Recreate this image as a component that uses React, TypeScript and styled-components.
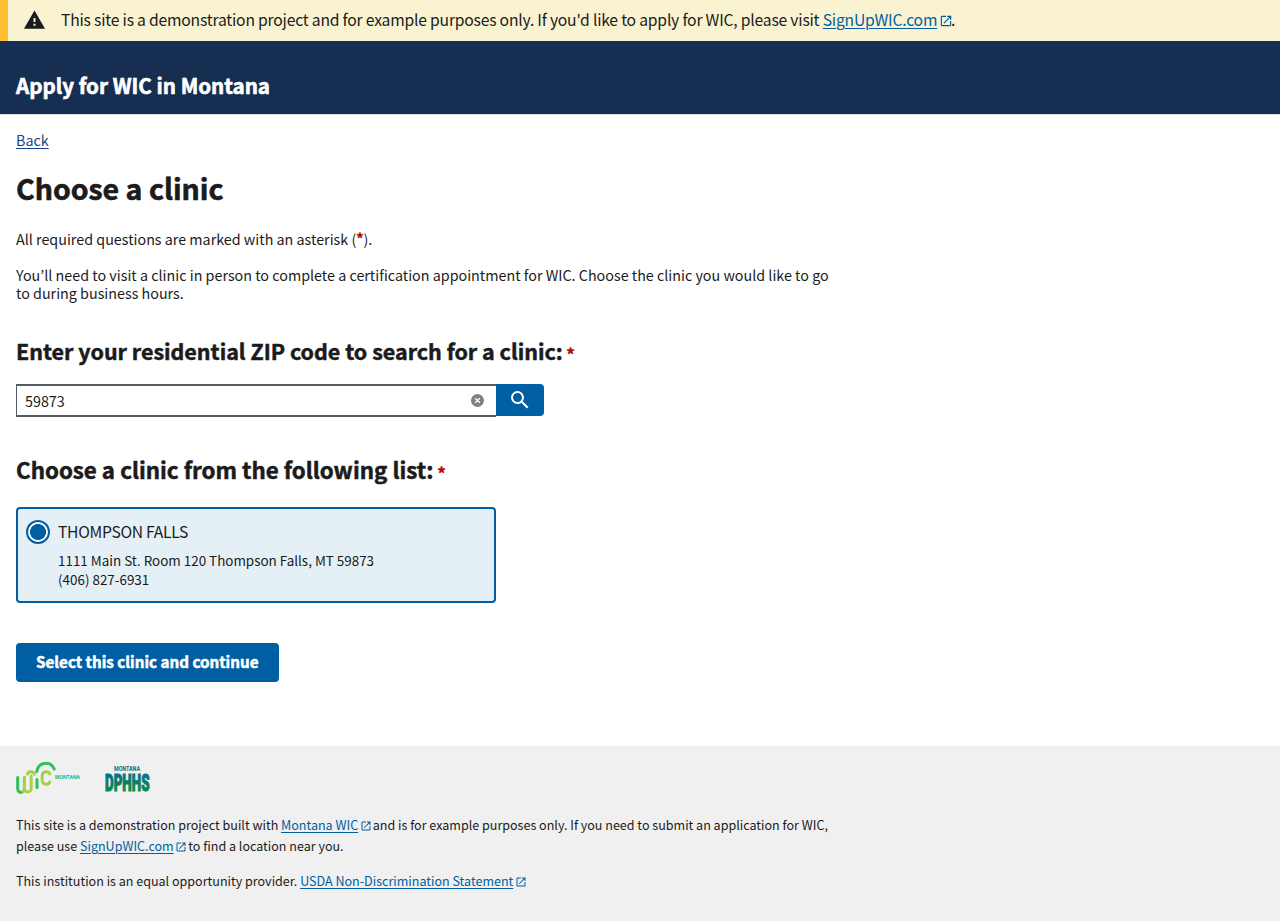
import React from 'react';
import styled, { createGlobalStyle } from 'styled-components';
import { MdLaunch, MdSearch, MdWarning } from 'react-icons/md';

const GlobalStyle = createGlobalStyle`
  *, *::before, *::after { box-sizing: border-box; }
  body {
    margin: 0;
    background: #fff;
    color: #1b1b1b;
    font-family: "Noto Sans CJK KR", "Noto Sans", sans-serif;
    font-size: 14.32px;
    line-height: 18px;
  }
  h1, h2, p { margin: 0; }
`;

const Banner = styled.aside`
  display: flex;
  align-items: center;
  height: 41px;
  padding: 0 0 2px 15px;
  border-left: 8px solid #ffbe2e;
  background: #faf3d1;
  svg.warning { width: 23px; height: 24px; flex: none; }
`;

const BannerText = styled.p`
  margin: 0 0 0 15px;
  font-size: 15.7px;
  letter-spacing: -0.21px;
  line-height: 24px;
  white-space: nowrap;
`;

const Link = styled.a`
  color: #005ea2;
  text-decoration: underline;
  text-underline-offset: 1.5px;
  text-decoration-thickness: 1px;
`;

const External = styled(MdLaunch)<{ $size: number; $gap: number }>`
  width: ${(p) => p.$size}px;
  height: ${(p) => p.$size}px;
  margin: 0 ${(p) => p.$gap}px 0 1.8px;
  color: #005ea2;
  vertical-align: -2px;
`;

const Header = styled.header`
  height: 74px;
  padding: 30px 16px 0;
  border-bottom: 1px solid #dfe1e2;
  background: #162e51;
  color: #fff;
  font-size: 20.6px;
  font-weight: 700;
  line-height: 28px;
  -webkit-text-stroke: 0.6px;
`;

const Main = styled.main`
  display: flex;
  flex-direction: column;
  align-items: flex-start;
  width: 848px;
  height: 631px;
  padding: 16px 16px 0;
`;

const BackLink = styled(Link)`
  color: #1a4480;
`;

const Title = styled.h1`
  margin-top: 19px;
  font-size: 28.5px;
  line-height: 40px;
  -webkit-text-stroke: 0.6px;
`;

const Paragraph = styled.p<{ $top: number }>`
  margin-top: ${(p) => p.$top}px;
  white-space: nowrap;
`;

const Required = styled.abbr`
  color: #b50909;
  font-weight: 700;
  line-height: 0;
  text-decoration: none;
  vertical-align: 1px;
  -webkit-text-stroke: 0.4px;
`;

const Question = styled.h2<{ $top: number; $size: number }>`
  margin-top: ${(p) => p.$top}px;
  font-size: ${(p) => p.$size}px;
  line-height: 30px;
  white-space: nowrap;
  -webkit-text-stroke: 0.5px;
  ${Required} {
    margin-left: -1.4px;
    font-size: 17px;
    vertical-align: -1px;
  }
`;

const Search = styled.form`
  display: flex;
  width: 528px;
  height: 33px;
  margin-top: 18px;
`;

const ZipField = styled.div`
  display: flex;
  align-items: center;
  justify-content: space-between;
  width: 480px;
  padding: 0 11px 0 8px;
  border: 2px solid #565c65;
  border-left-width: 1px;
  border-right: 0;
  svg { width: 15px; height: 15px; }
`;

const ZipInput = styled.input`
  width: 400px;
  height: 24px;
  padding: 0;
  border: 0;
  outline: 0;
  background: transparent;
  color: inherit;
  font: inherit;
`;

const SearchButton = styled.button`
  display: flex;
  align-items: center;
  justify-content: center;
  width: 48px;
  height: 32px;
  margin-top: 0.4px;
  padding: 0 0 1px;
  border: 0;
  border-radius: 0 4px 4px 0;
  background: #005ea2;
  color: #fff;
  svg { width: 24px; height: 24px; }
`;

const ClinicCard = styled.label`
  display: flex;
  gap: 8px;
  width: 480px;
  height: 96px;
  margin-top: 23px;
  padding: 11px 8px;
  border: 2px solid #005ea2;
  border-radius: 4px;
  background: #e4f0f6;
`;

const Radio = styled.span`
  flex: none;
  width: 24px;
  height: 24px;
  border: 2px solid #005ea2;
  border-radius: 50%;
  background: radial-gradient(circle, #005ea2 7.7px, #fff 8.3px);
`;

const ClinicName = styled.div`
  font-size: 15.7px;
  letter-spacing: -0.3px;
  line-height: 24px;
`;

const ClinicAddress = styled.div`
  margin-top: 7px;
  font-size: 13.43px;
  line-height: 19px;
`;

const Submit = styled.button`
  width: 262.5px;
  height: 39px;
  margin-top: 40px;
  padding: 0 0 3px;
  border: 0;
  border-radius: 4px;
  background: #005ea2;
  color: #fff;
  font: 700 15.2px/20px "Noto Sans CJK KR", sans-serif;
  white-space: nowrap;
  -webkit-text-stroke: 0.5px;
`;

const Footer = styled.footer`
  height: 175px;
  padding: 16px 16px 0;
  background: #f0f0f0;
  font-size: 12.54px;
  line-height: 21px;
`;

const Logos = styled.div`
  display: flex;
  gap: 24px;
  height: 32px;
`;

const FooterText = styled.p<{ $top: number }>`
  margin-top: ${(p) => p.$top}px;
  white-space: nowrap;
`;

const WicLogo = () => (
  <svg width="65" height="32" viewBox="0 0 65 32" fill="none" strokeLinecap="round" strokeWidth="3">
    <path d="M1.700 15.500V27a3.300 3.300 0 0 0 5.500 2.500" stroke="#2fbf5b" />
    <path d="M8.400 15.500V26.500a3.400 3.400 0 0 0 6.800 0V14M11.500 12c.5-2.600 5.500-3.600 7 .2" stroke="#a8d046" />
    <path d="M8.400 15.500V26c0 1.500-.4 2.600-1.200 3.500" stroke="#a8d046" />
    <path d="M21 17.500v8" stroke="#2fbf5b" />
    <path d="M33.800 12a4 4 0 0 0-7.600 1.500v5a4 4 0 0 0 7.600 1.500" stroke="#a8d046" />
    <path d="M20.800 9.500C22.500-.5 35-1.500 38.200 7" stroke="#2fbf5b" />
    <text x="39" y="17.300" fill="#2fb483" fontFamily="Roboto" fontSize="6.200" fontWeight="700" textLength="25" lengthAdjust="spacingAndGlyphs">MONTANA</text>
  </svg>
);

const DphhsLogo = () => (
  <svg width="46" height="32" viewBox="0 0 46 32">
    <defs>
      <linearGradient id="dphhs" x1="0" y1="10" x2="0" y2="30" gradientUnits="userSpaceOnUse">
        <stop offset=".15" stopColor="#08718a" />
        <stop offset=".8" stopColor="#078a4c" />
      </linearGradient>
    </defs>
    <text x="9" y="9.300" fill="#08718a" fontFamily="Roboto" fontSize="6.500" fontWeight="700" textLength="26" lengthAdjust="spacingAndGlyphs">MONTANA</text>
    <text x="0" y="29" fill="url(#dphhs)" stroke="url(#dphhs)" strokeWidth="1.200" fontFamily="Roboto" fontSize="24.500" fontWeight="900" textLength="44.500" lengthAdjust="spacingAndGlyphs">DPHHS</text>
  </svg>
);

const ClearIcon = () => (
  <svg viewBox="0 0 15 15">
    <circle cx="7.500" cy="7.500" r="6.500" fill="#808080" />
    <path d="M5.200 5.200l4.600 4.600M9.800 5.200L5.200 9.800" stroke="#fff" strokeWidth="1.300" />
  </svg>
);

export default function App() {
  return (
    <>
      <GlobalStyle />
      <Banner>
        <MdWarning className="warning" />
        <BannerText>
          This site is a demonstration project and for example purposes only. If you'd like to apply for WIC, please visit{' '}
          <Link>SignUpWIC.com</Link>
          <External $size={14} $gap={-2} />.
        </BannerText>
      </Banner>
      <Header><span>Apply for WIC in Montana</span></Header>
      <Main>
        <BackLink>Back</BackLink>
        <Title>Choose a clinic</Title>
        <Paragraph $top={22}>
          All required questions are marked with an asterisk (<Required>*</Required>).
        </Paragraph>
        <Paragraph $top={18}>
          You’ll need to visit a clinic in person to complete a certification appointment for WIC. Choose the clinic you would like to go
          <br />
          to during business hours.
        </Paragraph>
        <Question $top={34} $size={21.48}>
          Enter your residential ZIP code to search for a clinic: <Required>*</Required>
        </Question>
        <Search>
          <ZipField>
            <ZipInput defaultValue="59873" />
            <ClearIcon />
          </ZipField>
          <SearchButton type="button"><MdSearch /></SearchButton>
        </Search>
        <Question $top={37} $size={22.34}>
          Choose a clinic from the following list: <Required>*</Required>
        </Question>
        <ClinicCard>
          <Radio />
          <div>
            <ClinicName>THOMPSON FALLS</ClinicName>
            <ClinicAddress>
              <span>1111 Main St. Room 120 Thompson Falls, MT 59873</span>
              <br />
              (406) 827-6931
            </ClinicAddress>
          </div>
        </ClinicCard>
        <Submit><span>Select this clinic and continue</span></Submit>
      </Main>
      <Footer>
        <Logos>
          <WicLogo />
          <DphhsLogo />
        </Logos>
        <FooterText $top={20}>
          This site is a demonstration project built with <Link>Montana WIC</Link>
          <External $size={12} $gap={0.8} />
          and is for example purposes only. If you need to submit an application for WIC,
          <br />
          please use <Link>SignUpWIC.com</Link>
          <External $size={12} $gap={0.8} />
          to find a location near you.
        </FooterText>
        <FooterText $top={14}>
          This institution is an equal opportunity provider. <Link>USDA Non-Discrimination Statement</Link>
          <External $size={12} $gap={0} />
        </FooterText>
      </Footer>
    </>
  );
}
